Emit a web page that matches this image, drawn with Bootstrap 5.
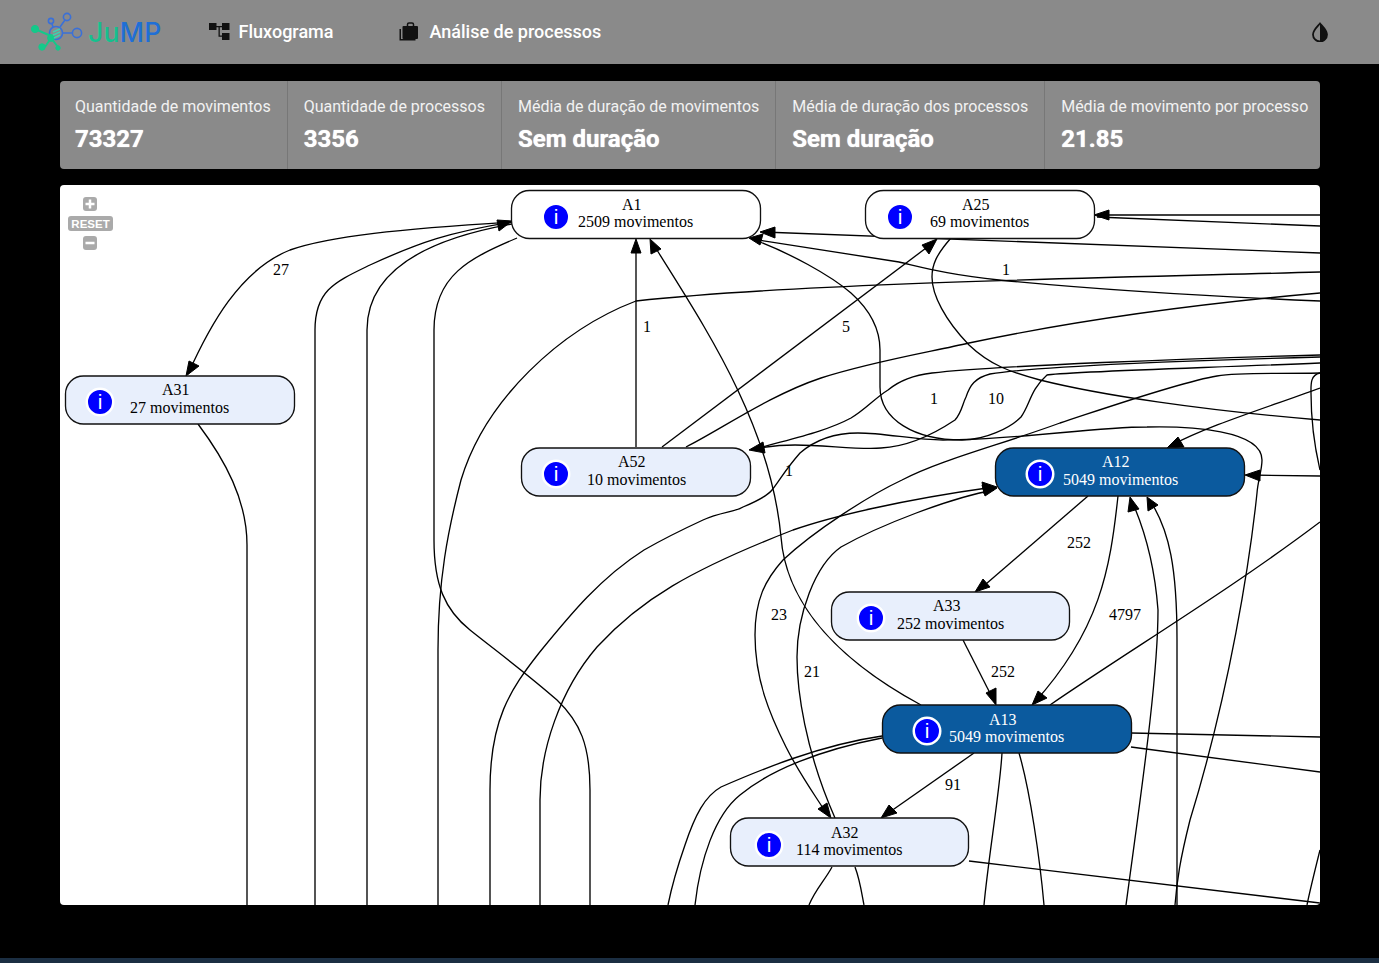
<!DOCTYPE html>
<html lang="pt-BR">
<head>
  <meta charset="UTF-8" />
  <meta name="viewport" content="width=device-width, initial-scale=1.0"/>
  <title>JuMP</title>
  <link href="https://cdn.jsdelivr.net/npm/bootstrap@5.3.0/dist/css/bootstrap.min.css" rel="stylesheet"/>
  <style>
    html, body { height: 100%; }
    body { background: #000; font-family: Roboto, "Liberation Sans", sans-serif; overflow: hidden; }
    .page-wrap { height: 963px; }
    .top-bar { background: #8a8a8a; height: 64px; padding: 0 50px 0 30px; }
    .brand-link { margin-right: 47px; }
    .brand-name { font-family: Inter, sans-serif; font-size: 26.5px; font-weight: 500; letter-spacing: .3px; line-height: 1; }
    .brand-ju { color: #15c08e; }
    .brand-mp { color: #1f6fd6; }
    .menu-link { color: #fff; font-size: 18px; font-weight: 500; text-decoration: none; padding-bottom: 2px; }
    .menu-link + .menu-link { margin-left: 66px; }
    .stats-box { background: #8a8a8a; border-radius: 4px; color: #fff; margin: 17px 59px 0 60px; height: 88px; }
    .stat-cell { flex: 1 1 auto; padding: 16px 16px 0; border-right: 1px solid #777; }
    .stat-cell:first-child { padding-left: 15px; }
    .stat-cell:last-child { border-right: 0; padding-right: 17px; }
    .stat-label { font-size: 16px; line-height: 20px; color: #f2f2f2; white-space: nowrap; }
    .stat-value { font-size: 24px; font-weight: 700; line-height: 32px; margin-top: 6px; white-space: nowrap; text-shadow: 0 0 1px #fff; }
    .graph-box { background: #fff; border-radius: 4px; margin: 16px 59px 0 60px; height: 720px; overflow: hidden; }
    .graph-box svg { display: block; }
    .edges path { fill: none; stroke: #000; stroke-width: 1.33; }
    .arrows path { fill: #000; stroke: #000; }
    .node-title, .node-count, .edge-label { font-family: "Liberation Serif", serif; font-size: 16px; }
    .node-box { fill: #e8effc; stroke: #111; stroke-width: 1.33; }
    .node-box.plain { fill: #fff; }
    .node-box.busy { fill: #0b5a9e; }
    .node-dark text { fill: #fff; }
    .info-dot { fill: #00f; stroke: #fff; stroke-width: 2.5; }
    .info-i { font-family: "Liberation Sans", sans-serif; font-size: 21px; fill: #fff; text-anchor: middle; }
    .zoom-ctl { fill: #aaa; }
    .zoom-txt { font-family: "Liberation Sans", sans-serif; font-size: 11.5px; font-weight: 700; fill: #fff; text-anchor: middle; }
    .bottom-strip { height: 5px; background: #1b2e42; }
  </style>
</head>
<body>
  <div class="page-wrap d-flex flex-column">
    <nav class="top-bar d-flex align-items-center flex-shrink-0">
      <a href="#" class="brand-link d-flex align-items-center text-decoration-none">
        <svg width="58" height="44" viewBox="0 0 58 44">
          <g fill="none" stroke="#3a70d8" stroke-width="1.6">
            <circle cx="26" cy="23" r="6.5"/>
            <circle cx="37" cy="7" r="3.6"/>
            <circle cx="21" cy="11" r="2.6"/>
            <circle cx="47" cy="23" r="4.6"/>
            <path d="M30 17 35 10M23 17 22 14M33 23H42"/>
          </g>
          <g fill="#14c98a" stroke="#14c98a">
            <path d="M5 19 21 26M21 28 15 37M21 28 28 37" stroke-width="2" fill="none"/>
            <circle cx="5" cy="19" r="3.6"/>
            <circle cx="21" cy="28" r="3.4"/>
            <circle cx="12" cy="37" r="3.2"/>
            <circle cx="28" cy="38" r="2.2"/>
          </g>
          <path d="M23 22 30 19M23 25 30 22M24 28 30 25" stroke="#3fd0b0" stroke-width="1.5"/>
        </svg>
        <span class="brand-name"><span class="brand-ju">Ju</span><span class="brand-mp">MP</span></span>
      </a>
      <a href="#" class="menu-link d-flex align-items-center gap-2">
        <svg width="22" height="18" viewBox="0 0 22 18" fill="#111">
          <rect x="0" y="1" width="7.5" height="7"/>
          <rect x="13" y="1" width="7.5" height="7"/>
          <rect x="13" y="11" width="7.5" height="7"/>
          <path d="M7 4h7v1.300H7zM9.500 5h1.300v8.500H14v1.300H9.500z"/>
        </svg>
        Fluxograma
      </a>
      <a href="#" class="menu-link d-flex align-items-center gap-2">
        <svg width="22" height="20" viewBox="0 0 22 20" fill="#111">
          <rect x="3.500" y="5" width="15.500" height="13" rx="1"/>
          <path d="M8.500 5.500V3.500C8.500 2.500 9.200 2 10 2h3c.8 0 1.500.5 1.500 1.500v2" fill="none" stroke="#111" stroke-width="1.500"/>
          <path d="M.5 8h1.500v10h14.500v1.500H.5z"/>
        </svg>
        Análise de processos
      </a>
      <svg class="ms-auto" width="18" height="20" viewBox="0 0 18 20">
        <path d="M9 1.500C6 5 2 8.500 2 12.500a7 7 0 0 0 14 0C16 8.500 12 5 9 1.500z" fill="none" stroke="#111" stroke-width="1.800"/>
        <path d="M9 1.500C12 5 16 8.500 16 12.500a7 7 0 0 1-7 7z" fill="#111"/>
      </svg>
    </nav>

    <div class="stats-box d-flex flex-shrink-0">
      <div class="stat-cell"><div class="stat-label">Quantidade de movimentos</div><div class="stat-value">73327</div></div>
      <div class="stat-cell"><div class="stat-label">Quantidade de processos</div><div class="stat-value">3356</div></div>
      <div class="stat-cell"><div class="stat-label">Média de duração de movimentos</div><div class="stat-value">Sem duração</div></div>
      <div class="stat-cell"><div class="stat-label">Média de duração dos processos</div><div class="stat-value">Sem duração</div></div>
      <div class="stat-cell"><div class="stat-label">Média de movimento por processo</div><div class="stat-value">21.85</div></div>
    </div>

    <div class="graph-box flex-shrink-0">
      <svg width="1260" height="720" viewBox="60 185 1260 720">
        <g class="edges">
          <path d="M512 222C400 229 330 236 290 250C240 270 210 325 188 374"/>
          <path d="M198 424C225 460 247 500 247 545V905"/>
          <path d="M512 222C450 232 420 242 370 265C335 282 315 290 315 330V905"/>
          <path d="M512 224C450 235 367 260 367 330V905"/>
          <path d="M517 238C470 258 434 275 434 330V540C434 585 445 610 470 630C495 650 525 672 557 700C580 722 590 745 590 790V905"/>
          <path d="M1320 272C1100 278 800 283 636 301C560 330 485 400 461 480C448 530 438 580 438 650V905"/>
          <path d="M636 447V242"/>
          <path d="M662 447 934 242"/>
          <path d="M686 447C720 430 770 395 821 378C870 362 930 352 969 343C1040 328 1150 308 1320 293"/>
          <path d="M652 242C700 320 770 420 781 537C785 590 820 650 921 705"/>
          <path d="M752 239C790 253 830 275 851 293C870 310 880 330 880 350V387C880 420 915 440 962 440C985 440 1010 428 1021 417C1030 405 1030 390 1047 375C1060 372 1200 368 1320 363"/>
          <path d="M752 450C790 439 825 432 851 418C865 410 875 398 888 390C900 380 915 375 932 373C990 366 1200 358 1320 355"/>
          <path d="M752 449C770 446 785 445 795 445C825 445 860 450 881 448C900 447 925 440 955 420C962 412 962 405 966 397C970 385 975 378 990 374C1040 366 1200 360 1320 357"/>
          <path d="M490 905V790C490 720 510 690 539 653C570 615 600 578 644 550C665 538 690 526 703 520C720 512 735 512 743 507C755 502 768 495 772 490C780 480 785 470 800 453C815 440 835 433 858 433C885 433 915 440 943 440C1020 440 1090 427 1147 427C1190 426 1262 430 1262 460C1262 470 1258 480 1257 493C1250 560 1230 690 1190 820C1180 860 1177 880 1175 905"/>
          <path d="M540 905V800C540 750 560 690 597 647C640 600 690 570 793 530C830 517 900 500 994 487"/>
          <path d="M994 490C950 498 880 525 841 547C815 565 797 615 797 657C797 690 805 750 835 818"/>
          <path d="M1320 373C1270 374 1240 372 1217 376C1180 382 1100 410 1060 423C1000 445 940 460 902 480C870 495 815 530 783 560C765 580 755 600 755 635C755 680 770 715 786 747C800 775 815 795 828 816"/>
          <path d="M1320 373C1310 375 1311 385 1311 393C1311 410 1313 440 1320 470"/>
          <path d="M951 238C936 255 932 265 932 277C932 295 945 320 969 345C990 365 1010 372 1040 380C1100 395 1200 410 1320 420"/>
          <path d="M1320 215H1097"/>
          <path d="M1320 226 1097 217"/>
          <path d="M1320 253 763 232"/>
          <path d="M1320 301C1200 296 1100 290 999 280C950 275 925 268 899 262L752 239"/>
          <path d="M1320 388C1260 410 1210 425 1170 446"/>
          <path d="M1320 476 1247 475"/>
          <path d="M1088 496 979 590"/>
          <path d="M1118 496C1110 570 1100 630 1034 703"/>
          <path d="M1126 905C1140 800 1158 680 1158 610C1155 570 1145 530 1131 499"/>
          <path d="M1177 905V640C1177 570 1170 530 1149 499"/>
          <path d="M1320 522C1230 590 1130 650 1050 705"/>
          <path d="M963 640 995 703"/>
          <path d="M974 753 884 816"/>
          <path d="M882 736C820 745 760 770 721 787C705 796 695 815 685 845C678 865 672 885 668 905"/>
          <path d="M882 738C820 750 770 770 740 795C715 815 700 860 695 905"/>
          <path d="M1002 753C1000 790 988 860 984 905"/>
          <path d="M1019 753C1030 790 1040 860 1044 905"/>
          <path d="M1131 733 1320 737"/>
          <path d="M1131 747 1320 772"/>
          <path d="M969 861 1320 903"/>
          <path d="M832 867C825 880 815 890 809 905"/>
          <path d="M855 867C860 880 862 895 864 905"/>
          <path d="M1320 850C1315 870 1310 890 1307 905"/>
        </g>
        <g class="arrows">
          <path d="M186 376 189 361 199 366z"/>
          <path d="M512 221 497 220 499 231z"/>
          <path d="M636 239 631 253H641z"/>
          <path d="M937 239 922 245 929 254z"/>
          <path d="M650 239 651 254 661 249z"/>
          <path d="M749 238 763 234 760 245z"/>
          <path d="M760 232 775 227 775 238z"/>
          <path d="M1094 215 1109 210V220z"/>
          <path d="M749 450 763 442 765 453z"/>
          <path d="M997 487 982 482 984 494z"/>
          <path d="M997 488 982 485 985 496z"/>
          <path d="M1167 448 1178 437 1184 447z"/>
          <path d="M1245 475 1260 470V481z"/>
          <path d="M1130 497 1128 512 1139 509z"/>
          <path d="M1147 497 1148 511 1158 505z"/>
          <path d="M975 592 983 579 990 587z"/>
          <path d="M996 705 986 693 996 688z"/>
          <path d="M1032 705 1038 691 1047 698z"/>
          <path d="M831 818 818 809 827 803z"/>
          <path d="M881 818 889 805 897 813z"/>
        </g>

        <g class="edge-label">
          <text x="273" y="275">27</text>
          <text x="643" y="332">1</text>
          <text x="842" y="332">5</text>
          <text x="1002" y="275">1</text>
          <text x="930" y="404">1</text>
          <text x="988" y="404">10</text>
          <text x="785" y="476">1</text>
          <text x="1067" y="548">252</text>
          <text x="1109" y="620">4797</text>
          <text x="771" y="620">23</text>
          <text x="804" y="677">21</text>
          <text x="991" y="677">252</text>
          <text x="945" y="790">91</text>
        </g>

        <g>
          <rect class="node-box plain" x="511.500" y="190.500" width="249" height="48" rx="18"/>
          <circle class="info-dot" cx="556" cy="217" r="13.250"/>
          <text class="info-i" x="556" y="224">i</text>
          <text class="node-title" x="622" y="210">A1</text>
          <text class="node-count" x="578" y="227">2509 movimentos</text>
        </g>
        <g>
          <rect class="node-box plain" x="865.500" y="190.500" width="229" height="48" rx="18"/>
          <circle class="info-dot" cx="900" cy="217" r="13.250"/>
          <text class="info-i" x="900" y="224">i</text>
          <text class="node-title" x="962" y="210">A25</text>
          <text class="node-count" x="930" y="227">69 movimentos</text>
        </g>
        <g>
          <rect class="node-box" x="65.500" y="376" width="229" height="48" rx="18"/>
          <circle class="info-dot" cx="100" cy="402" r="13.250"/>
          <text class="info-i" x="100" y="409">i</text>
          <text class="node-title" x="162" y="395">A31</text>
          <text class="node-count" x="130" y="413">27 movimentos</text>
        </g>
        <g>
          <rect class="node-box" x="521.500" y="448" width="229" height="48" rx="18"/>
          <circle class="info-dot" cx="556" cy="474" r="13.250"/>
          <text class="info-i" x="556" y="481">i</text>
          <text class="node-title" x="618" y="467">A52</text>
          <text class="node-count" x="587" y="485">10 movimentos</text>
        </g>
        <g class="node-dark">
          <rect class="node-box busy" x="995.500" y="448" width="249" height="48" rx="18"/>
          <circle class="info-dot" cx="1040" cy="474" r="13.250"/>
          <text class="info-i" x="1040" y="481">i</text>
          <text class="node-title" x="1102" y="467">A12</text>
          <text class="node-count" x="1063" y="485">5049 movimentos</text>
        </g>
        <g>
          <rect class="node-box" x="831.500" y="592" width="238" height="48" rx="18"/>
          <circle class="info-dot" cx="871" cy="618" r="13.250"/>
          <text class="info-i" x="871" y="625">i</text>
          <text class="node-title" x="933" y="611">A33</text>
          <text class="node-count" x="897" y="629">252 movimentos</text>
        </g>
        <g class="node-dark">
          <rect class="node-box busy" x="882.500" y="705" width="249" height="48" rx="18"/>
          <circle class="info-dot" cx="927" cy="731" r="13.250"/>
          <text class="info-i" x="927" y="738">i</text>
          <text class="node-title" x="989" y="725">A13</text>
          <text class="node-count" x="949" y="742">5049 movimentos</text>
        </g>
        <g>
          <rect class="node-box" x="730.500" y="818" width="238" height="48" rx="18"/>
          <circle class="info-dot" cx="769" cy="845" r="13.250"/>
          <text class="info-i" x="769" y="852">i</text>
          <text class="node-title" x="831" y="838">A32</text>
          <text class="node-count" x="796" y="855">114 movimentos</text>
        </g>

        <rect class="zoom-ctl" x="83" y="197" width="14" height="14" rx="3"/>
        <path d="M90 199.500V208.500M85.500 204H94.500" stroke="#fff" stroke-width="2.500"/>
        <rect class="zoom-ctl" x="68" y="216" width="45" height="15" rx="3"/>
        <text class="zoom-txt" x="90.500" y="228">RESET</text>
        <rect class="zoom-ctl" x="83" y="236" width="14" height="14" rx="3"/>
        <path d="M85.500 243H94.500" stroke="#fff" stroke-width="2.500"/>
      </svg>
    </div>

    <div class="bottom-strip mt-auto flex-shrink-0"></div>
  </div>
  <script src="https://cdn.jsdelivr.net/npm/bootstrap@5.3.0/dist/js/bootstrap.bundle.min.js"></script>
</body>
</html>
